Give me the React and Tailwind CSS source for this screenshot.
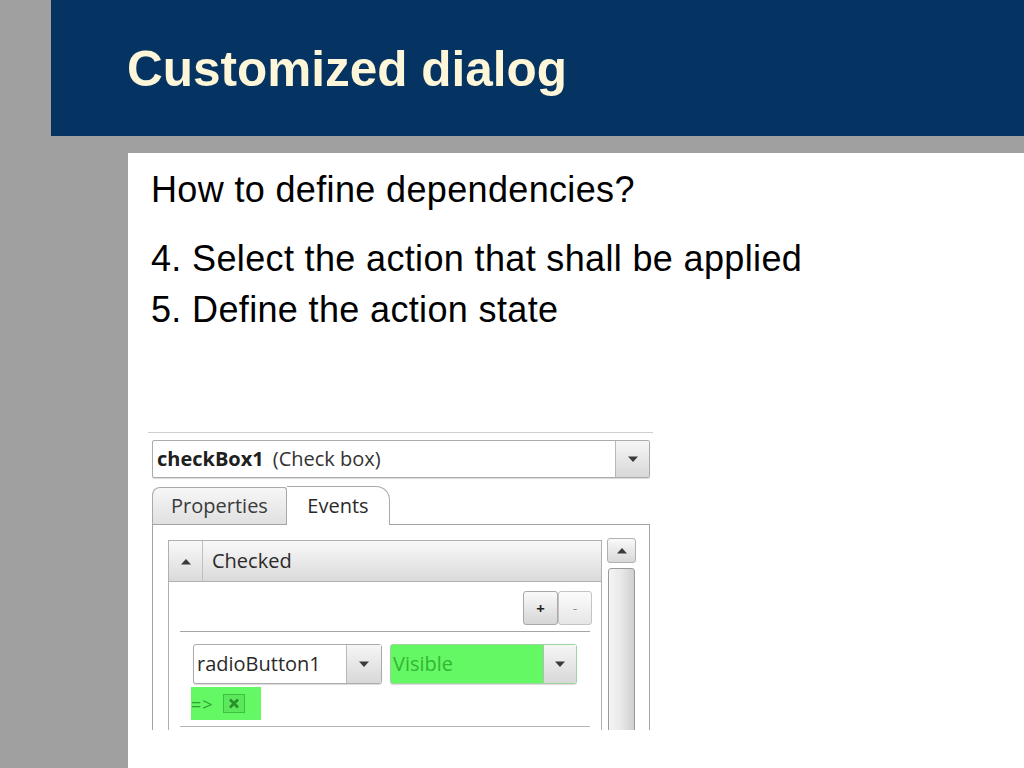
import React from "react";

const Tri = ({ up = false, className = "" }) => (
  <svg width="12" height="7" viewBox="0 0 12 7" className={className}>
    {up ? (
      <polygon points="1,6.5 11,6.5 6,1" fill="#3a3a3a" />
    ) : (
      <polygon points="1,0.5 11,0.5 6,6" fill="#3a3a3a" />
    )}
  </svg>
);

const DropBtn = ({ w = "w-[34px]" }) => (
  <div className={`${w} h-full flex items-center justify-center border-l border-[#b8b8b8] bg-linear-to-b from-[#f6f6f6] to-[#d8d8d8]`}>
    <Tri />
  </div>
);

export default function App() {
  return (
    <div className="w-[1024px] h-[768px] bg-[#a0a0a0] flex flex-col overflow-hidden">
      {/* Header */}
      <div className="ml-[51px] h-[136px] shrink-0 bg-[#053362] pl-[76px] pt-[44px]">
        <div
          className="text-[49.5px] leading-[50px] font-bold text-[#fdf6d8]"
          style={{ fontFamily: '"Liberation Sans", Arial, sans-serif' }}
        >
          Customized dialog
        </div>
      </div>

      {/* Main white area */}
      <div className="ml-[128px] mt-[17px] flex-1 bg-white pl-[23px] flex flex-col">
        <div
          className="text-black text-[36px] tracking-[0.35px]"
          style={{ fontFamily: '"Liberation Sans", Arial, sans-serif' }}
        >
          <div className="leading-[36px] mt-[19px]">How to define dependencies?</div>
          <div className="leading-[36px] mt-[33px]">4. Select the action that shall be applied</div>
          <div className="leading-[36px] mt-[15px]">5. Define the action state</div>
        </div>

        {/* Dialog screenshot */}
        <div
          className="ml-[-3px] mt-[104px] w-[505px] h-[298px] overflow-hidden border-t border-[#cfcfcf] bg-white text-[#202020] text-[20px]"
          style={{ fontFamily: '"Open Sans", "Noto Sans", sans-serif' }}
        >
          <div className="pl-[4px] pr-[3px] pt-[7px]">
            {/* Combo */}
            <div className="h-[38px] flex border border-[#ababab] rounded-[2px] bg-white shadow-[0_1px_1px_rgba(0,0,0,0.15)]">
              <div className="flex-1 flex items-center pl-[4px] leading-none">
                <span className="font-bold">checkBox1</span>
                <span className="ml-[9px] text-[#333]">(Check box)</span>
              </div>
              <DropBtn />
            </div>

            {/* Tabs */}
            <div className="mt-[7px] h-[39px] flex items-end">
              <div className="w-[135px] h-[37px] flex items-center justify-center border border-b-0 border-[#a9a9a9] rounded-tl-[8px] rounded-tr-[3px] bg-linear-to-b from-[#f7f7f7] to-[#e0e0e0] text-[#3a3a3a]">
                Properties
              </div>
              <div className="relative w-[103px] h-[39px] flex items-center justify-center border border-b-0 border-l-0 border-[#a9a9a9] rounded-tr-[14px] bg-white mb-[-1px] z-10 text-[#2a2a2a]">
                Events
              </div>
            </div>

            {/* Panel */}
            <div className="h-[220px] border border-[#a3a3a3] bg-white flex pl-[15px] pt-[15px] pr-[12px]">
              {/* Section */}
              <div className="w-[434px] flex flex-col">
                <div className="h-[42px] flex border border-[#b0b0b0] bg-linear-to-b from-[#f9f9f9] to-[#dadada]">
                  <div className="w-[34px] flex items-center justify-center border-r border-[#c0c0c0]">
                    <Tri up />
                  </div>
                  <div className="flex items-center pl-[9px] text-[#2a2a2a]">Checked</div>
                </div>
                <div className="flex-1 border-l border-r border-[#b0b0b0] bg-white flex flex-col">
                  <div className="flex justify-end pt-[9px] pr-[9px]">
                    <div className="w-[35px] h-[34px] flex items-center justify-center border border-[#a8a8a8] rounded-[3px] bg-linear-to-b from-[#fafafa] to-[#d6d6d6] text-[15px] font-bold text-[#222] leading-none">
                      +
                    </div>
                    <div className="w-[34px] h-[34px] flex items-center justify-center border border-[#c4c4c4] rounded-[3px] bg-linear-to-b from-[#fcfcfc] to-[#e6e6e6] text-[13px] text-[#888] leading-none">
                      -
                    </div>
                  </div>
                  <div className="mx-[11px] mt-[6px] h-px bg-[#a5a5a5]" />
                  <div className="flex pl-[24px] pt-[12px] gap-[8px]">
                    <div className="w-[189px] h-[40px] flex border border-[#ababab] rounded-[3px] bg-white shadow-[0_1px_1px_rgba(0,0,0,0.15)]">
                      <div className="flex-1 flex items-center pl-[3px] text-[#2a2a2a]">radioButton1</div>
                      <DropBtn w="w-[35px]" />
                    </div>
                    <div className="w-[187px] h-[40px] flex border border-[#9fd39f] rounded-[3px] bg-[#64f864] shadow-[0_1px_1px_rgba(0,0,0,0.15)]">
                      <div className="flex-1 flex items-center pl-[2px] text-[#35b535]">Visible</div>
                      <DropBtn w="w-[33px]" />
                    </div>
                  </div>
                  <div className="ml-[22px] mt-[3px] w-[70px] h-[33px] bg-[#64f864] flex items-center gap-[9px] pl-[0px]">
                    <span className="text-[18px] text-[#2f9f2f] leading-none tracking-[1px]">=&gt;</span>
                    <div className="w-[22px] h-[19px] border border-[#3fbf3f] bg-[#5ce85c] flex items-center justify-center">
                      <svg width="12" height="11" viewBox="0 0 12 11">
                        <path d="M2 1.5 L10 9.5 M10 1.5 L2 9.5" stroke="#2a8f2a" strokeWidth="2.6" />
                      </svg>
                    </div>
                  </div>
                  <div className="mx-[11px] mt-[6px] h-px bg-[#b5b5b5]" />
                </div>
              </div>
              {/* Scrollbar */}
              <div className="ml-[5px] w-[29px] flex flex-col -mt-[2px]">
                <div className="h-[25px] flex items-center justify-center border border-[#b0b0b0] rounded-[3px] bg-linear-to-b from-[#fafafa] to-[#d8d8d8]">
                  <Tri up />
                </div>
                <div className="mt-[5px] mx-[1px] flex-1 border border-[#9a9a9a] rounded-t-[3px] bg-linear-to-r from-[#f4f4f4] via-[#e8e8e8] to-[#cfcfcf]" />
              </div>
            </div>
          </div>
        </div>
      </div>
    </div>
  );
}
